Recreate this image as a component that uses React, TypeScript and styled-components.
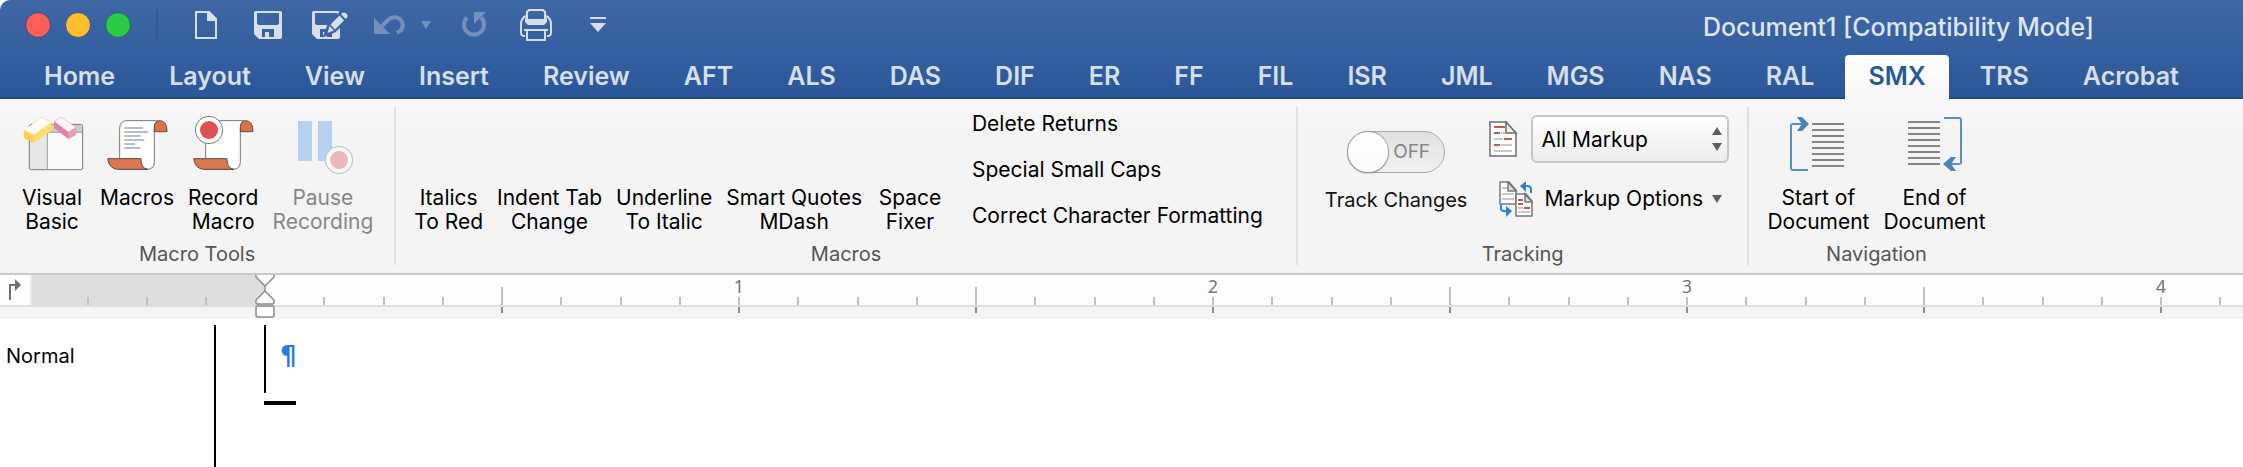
import React from 'react';
import styled, { createGlobalStyle } from 'styled-components';

const GlobalStyle = createGlobalStyle`
  *, *::before, *::after { box-sizing: border-box; }
  body { margin: 0; background: #fff; font-family: Inter, "Noto Sans", sans-serif; color: #000; }
  button, select, input { font: inherit; color: inherit; margin: 0; padding: 0; border: 0; background: none; }
  svg { display: block; flex: none; }
`;

const Page = styled.div`
  display: flex;
  flex-direction: column;
  min-height: 100vh;
  overflow: hidden;
`;

const Header = styled.header`
  border-top-left-radius: 10px;
  background: linear-gradient(#3e67a5, #2a579a);
  box-shadow: inset 0 -2px 0 #24487f;
`;

const TitleBar = styled.div`
  display: flex;
  align-items: center;
  height: 55px;
  padding: 0 149px 0 25px;
`;

const WindowTools = styled.div`
  display: flex;
  align-items: center;
  padding-bottom: 5px;
`;

const WindowButton = styled.button<{ $fill: string; $edge: string }>`
  width: 26px;
  height: 26px;
  margin-right: 14px;
  border-radius: 50%;
  border: 1px solid ${(p) => p.$edge};
  background: ${(p) => p.$fill};
`;

const Separator = styled.span`
  width: 2px;
  height: 32px;
  margin: 0 17px 0 11px;
  background: #33588f;
`;

const QuickButton = styled.button`
  display: flex;
  justify-content: center;
  align-items: center;
  width: 62px;
  height: 40px;
  color: #d7dfee;
`;

const UndoGroup = styled.div`
  display: flex;
  justify-content: center;
  gap: 16px;
  width: 82px;
`;

const FadedButton = styled(QuickButton)<{ $wide?: boolean }>`
  width: ${(p) => (p.$wide ? '62px' : 'auto')};
  color: #7590be;
`;

const DocTitle = styled.h1`
  margin: 0 0 0 auto;
  padding-bottom: 2px;
  font-size: 25px;
  font-weight: 500;
  line-height: 30px;
  color: #dfe6f1;
  white-space: nowrap;
`;

const TabBar = styled.nav`
  display: flex;
  gap: 8px;
  padding-left: 21px;
`;

const Tab = styled.button<{ $active?: boolean }>`
  padding: 0 23px 2px;
  border-radius: 4px 4px 0 0;
  font-size: 25px;
  font-weight: 600;
  line-height: 42px;
  white-space: nowrap;
  color: ${(p) => (p.$active ? '#2a579a' : '#d7dfec')};
  background: ${(p) => (p.$active ? 'linear-gradient(#fff, #f7f7f7)' : 'none')};
`;

const Ribbon = styled.section`
  display: flex;
  padding: 8px 0;
  background: linear-gradient(#f8f8f8, #f4f4f4 36px);
  border-bottom: 2px solid #c9c9c9;
`;

const Group = styled.div`
  display: flex;
  flex-direction: column;
  justify-content: space-between;
  height: 158px;
  border-right: 2px solid #e0e0e0;
  &:last-child { border-right-color: transparent; }
`;

const GroupBody = styled.div<{ $end: number }>`
  display: flex;
  align-items: flex-start;
  gap: 2px;
  padding: 0 ${(p) => p.$end}px 0 12px;
`;

const GroupName = styled.div`
  font-size: 20px;
  line-height: 22px;
  text-align: center;
  color: #555;
`;

const BigButton = styled.button`
  display: flex;
  flex-direction: column;
  align-items: center;
  min-width: 80px;
  padding: 9px 6px 0;
  font-size: 21px;
  line-height: 24px;
  white-space: pre;
  &:disabled { color: #868686; }
`;

const IconSlot = styled.span`
  width: 60px;
  height: 60px;
  margin-bottom: 10px;
  svg { overflow: visible; }
`;

const CommandList = styled.div`
  display: flex;
  flex-direction: column;
  align-items: flex-start;
  gap: 22px;
  padding: 5px 0 0 20px;
`;

const TextButton = styled.button`
  font-size: 21px;
  line-height: 24px;
  white-space: nowrap;
`;

const TrackBlock = styled.label`
  display: flex;
  flex-direction: column;
  align-items: center;
  gap: 15px;
  padding: 24px 20px 0 15px;
  font-size: 20px;
  line-height: 24px;
  color: #111;
  white-space: nowrap;
`;

const Switch = styled.span`
  display: grid;
  align-items: center;
  width: 98px;
  height: 42px;
`;

const SwitchInput = styled.input`
  appearance: none;
  grid-area: 1 / 1;
  width: 98px;
  height: 42px;
  border: 1px solid #a9a9a9;
  border-radius: 21px;
  background: linear-gradient(#e0e0e0, #f2f2f2);
  &::before {
    content: '';
    display: block;
    width: 40px;
    height: 40px;
    border-radius: 50%;
    background: linear-gradient(#fff, #fafafa);
    box-shadow: 0 0 0 1px #999, 0 1px 2px #777;
  }
`;

const SwitchText = styled.span`
  grid-area: 1 / 1;
  padding-left: 46px;
  font-size: 19px;
  color: #858585;
`;

const MarkupColumn = styled.div`
  display: flex;
  flex-direction: column;
  gap: 18px;
  padding-top: 8px;
`;

const MarkupRow = styled.div`
  display: flex;
  align-items: center;
  gap: 14px;
`;

const SelectBox = styled.div`
  display: grid;
  align-items: center;
  width: 198px;
  svg { grid-area: 1 / 1; justify-self: end; margin-right: 7px; pointer-events: none; }
`;

const Select = styled.select`
  grid-area: 1 / 1;
  appearance: none;
  height: 48px;
  padding: 0 30px 0 8px;
  border: 2px solid #c6c6c6;
  border-radius: 6px;
  background: linear-gradient(#fff, #ececec);
  font-size: 21px;
`;

const OptionsButton = styled.button`
  display: flex;
  align-items: center;
  gap: 11px;
  margin-left: 10px;
  font-size: 21px;
  line-height: 24px;
  white-space: nowrap;
  svg:last-child { margin-left: -2px; }
`;

const Ruler = styled.div`
  position: relative;
  display: flex;
  height: 44px;
  overflow: hidden;
  background: linear-gradient(#fdfdfd 30px, #dedede 30px, #dedede 32px, #f4f4f4 32px);
`;

const TabStop = styled.button`
  display: flex;
  flex: none;
  align-items: center;
  width: 32px;
  height: 30px;
  padding-left: 8px;
  border-right: 2px solid #ececec;
`;

const MarginZone = styled.div`
  display: flex;
  flex: none;
  justify-content: flex-end;
  width: 234px;
  height: 38px;
  overflow: hidden;
  background: linear-gradient(#dedede 30px, transparent 30px);
`;

const Inch = styled.div`
  display: grid;
  flex: none;
  grid-template-columns: repeat(8, 1fr);
  width: 474px;
  height: 38px;
`;

const TickCell = styled.div`
  display: flex;
  flex-direction: column;
  justify-content: flex-end;
  align-items: flex-end;
  min-width: 59px;
  height: 38px;
`;

const TickUp = styled.span<{ $tall?: boolean }>`
  width: 2px;
  height: ${(p) => (p.$tall ? 18 : 8)}px;
  background: #c0c0c0;
`;

const TickDown = styled.span<{ $shown?: boolean }>`
  width: 2px;
  height: 6px;
  margin-top: 2px;
  background: ${(p) => (p.$shown ? '#8c8c8c' : 'transparent')};
`;

const TickLabel = styled.span`
  width: 40px;
  margin-right: -19px;
  font-family: "Noto Sans", sans-serif;
  font-size: 18px;
  line-height: 22px;
  text-align: center;
  color: #777;
`;

const IndentMarker = styled.div`
  position: absolute;
  left: 254px;
  top: 0;
`;

const Workspace = styled.main`
  display: flex;
  flex: 1;
  min-height: 148px;
  padding-top: 6px;
  background: #fff;
`;

const StyleArea = styled.aside`
  width: 216px;
  padding: 19px 0 0 6px;
  border-right: 2px solid #000;
  font-size: 20px;
  line-height: 24px;
`;

const Canvas = styled.article`
  flex: 1;
  padding-left: 48px;
`;

const Line = styled.p`
  display: flex;
  height: 68px;
  margin: 0 0 8px;
  padding: 14px 0 0 14px;
  border-left: 2px solid #000;
  font-family: "DejaVu Sans", sans-serif;
  font-size: 26px;
  font-weight: 700;
  line-height: 34px;
  color: #2b7ae6;
`;

const EndMark = styled.div`
  width: 32px;
  height: 4px;
  background: #000;
`;

const diskBody =
  'M2 0H26Q28 0 28 2V26Q28 28 26 28H5L0 23V2Q0 0 2 0ZM3 2V12Q3 14 5 14H23Q25 14 25 12V2ZM8 18V26H11V21H15V26H20V18Z';

const NewIcon = () => (
  <svg width="22" height="28" viewBox="0 0 22 28">
    <path d="M1 1H14L21 8V27H1Z" fill="none" stroke="currentColor" strokeWidth="2" />
    <path d="M12 0H14L22 8V10H12Z" fill="currentColor" />
  </svg>
);

const SaveIcon = () => (
  <svg width="28" height="28" viewBox="0 0 28 28">
    <path d={diskBody} fill="currentColor" fillRule="evenodd" />
  </svg>
);

const SaveAsIcon = () => (
  <svg width="36" height="28" viewBox="0 0 36 28" overflow="visible">
    <path d={diskBody} fill="currentColor" fillRule="evenodd" />
    <path d="M15 22L18 14L31 1L36 6L22 19Z" fill="#3a63a1" stroke="#3a63a1" strokeWidth="5" />
    <path d="M29 3L31 1.600Q33 1 35 3Q36.500 5 35 6.500L33.500 8Z" fill="currentColor" />
    <path d="M27.500 4.500L32 9.500L23 18.500L18.500 13.500Z" fill="currentColor" />
    <path d="M17.500 15L22 19.500L15.500 22Z" fill="currentColor" />
  </svg>
);

const UndoIcon = () => (
  <svg width="31" height="21" viewBox="0 0 31 21">
    <path d="M0 3V19H16Z" fill="currentColor" />
    <path d="M8 11L14 5Q20 0 26 4Q31 9 27 15L23 18" fill="none" stroke="currentColor" strokeWidth="4" />
  </svg>
);

const RedoIcon = () => (
  <svg width="25" height="28" viewBox="0 0 25 28">
    <path d="M12 1H24L12 13Z" fill="currentColor" />
    <path d="M5 6.500A10 10 0 1 0 19 6.500" fill="none" stroke="currentColor" strokeWidth="4" />
  </svg>
);

const PrintIcon = () => (
  <svg width="32" height="32" viewBox="0 0 32 32">
    <path d="M7 12V3L9 1H23L25 3V12" fill="none" stroke="currentColor" strokeWidth="2" />
    <path d="M5 9L7 10H25L27 9V13L24 16H8L5 13Z" fill="currentColor" />
    <path d="M6 7L4 8Q1 11 1 15V24Q1 27 5 27M26 7L28 8Q31 11 31 15V24Q31 27 27 27" fill="none" stroke="currentColor" strokeWidth="2" />
    <path d="M4 20H28V22H4Z" fill="currentColor" />
    <path d="M7 21H25V31H7Z" fill="none" stroke="currentColor" strokeWidth="2" />
  </svg>
);

const CustomizeIcon = () => (
  <svg width="16" height="16" viewBox="0 0 16 16">
    <path d="M0 0H16V2H0ZM0 6H16L8 15Z" fill="currentColor" />
  </svg>
);

const CaretIcon = ({ color = 'currentColor' }: { color?: string }) => (
  <svg width="10" height="8" viewBox="0 0 10 8">
    <path d="M0 0H10L5 8Z" fill={color} />
  </svg>
);

const StepperIcon = () => (
  <svg width="10" height="24" viewBox="0 0 10 24">
    <path d="M5 0L10 8H0ZM0 16H10L5 24Z" fill="#5e5e5e" />
  </svg>
);

const VisualBasicIcon = () => (
  <svg width="60" height="60" viewBox="66 48 180 180">
    <rect x="88" y="73" width="160" height="136" rx="7" fill="#fafafa" stroke="#777" strokeWidth="3" />
    <path d="M90 97H142V207H95Q90 207 90 202Z" fill="#e7e7e7" />
    <path d="M90 80Q90 75 95 75H241Q246 75 246 80V96H90Z" fill="#cdcdcd" />
    <path d="M88 97H248M142 97V208" stroke="#777" strokeWidth="2" />
    <path d="M72 93L125 52L155 67V91L101 128L72 115Z" fill="#f9cf4e" />
    <path d="M101 105V128L155 91V67Z" fill="#ffdc66" />
    <path d="M72 91L125 52L155 67L101 105Z" fill="#fffdf5" stroke="#e6cf84" strokeWidth="1" />
    <path d="M162 63L183 52L228 82V104L205 117L162 84Z" fill="#dd86a3" />
    <path d="M205 96V117L228 104V82Z" fill="#eb9bb4" />
    <path d="M162 63L183 52L228 82L205 96Z" fill="#fff6fa" stroke="#dfa5b8" strokeWidth="1" />
  </svg>
);

const ScrollShape = ({ open }: { open?: boolean }) => (
  <>
    <path
      d={open ? 'M38 62H152Q142 70 142 85V185Q142 208 120 208H38Z' : 'M60 62H152Q142 70 142 85V185Q142 208 120 208H38V85Q38 62 60 62Z'}
      fill="#fff"
      stroke="#777"
      strokeWidth="3"
    />
    <path d="M142 95V80Q144 62 160 62Q180 64 180 95Z" fill="#df7048" stroke="#5f4a42" strokeWidth="3" />
    <path d="M2 176H102Q101 204 122 208H32Q6 206 2 176Z" fill="#dc7650" stroke="#5f4a42" strokeWidth="3" />
  </>
);

const MacrosIcon = () => (
  <svg width="60" height="60" viewBox="0 48 180 180">
    <ScrollShape />
    <path d="M52 84H108M52 96H123M52 108H101M52 120H112M52 132H84M52 144H101" stroke="#b9bdc9" strokeWidth="6" />
  </svg>
);

const RecordIcon = () => (
  <svg width="60" height="60" viewBox="0 48 180 180">
    <ScrollShape open />
    <circle cx="48" cy="90" r="41" fill="#fff" stroke="#777" strokeWidth="3" />
    <circle cx="48" cy="90" r="27" fill="#dd5053" />
  </svg>
);

const PauseIcon = () => (
  <svg width="60" height="60" viewBox="879 48 180 180">
    <path d="M894 63H936V183H894ZM954 63H996V183H954Z" fill="#b5d1ef" />
    <circle cx="1017" cy="180" r="41" fill="#f8f8f8" stroke="#bbb" strokeWidth="3" />
    <circle cx="1017" cy="180" r="27" fill="#edb8b9" />
  </svg>
);

const StartIcon = () => (
  <svg width="60" height="60" viewBox="0 0 60 60">
    <path d="M24 8H56M24 14H56M24 20H56M24 26H56M24 32H56M24 38H56M24 44H56M24 50H56" stroke="#848484" strokeWidth="2" />
    <path d="M20 54H5Q3 54 3 52V10Q3 8 5 8H18" fill="none" stroke="#5a8fc4" strokeWidth="2" />
    <path d="M9 1H14L21 8L14 15H9L14 8Z" fill="#4b82b9" />
  </svg>
);

const EndIcon = () => (
  <svg width="60" height="60" viewBox="0 0 60 60">
    <path d="M3 6H35M3 12H35M3 18H35M3 24H35M3 30H35M3 36H35M3 42H35M3 48H35" stroke="#848484" strokeWidth="2" />
    <path d="M39 2H54Q56 2 56 4V46Q56 48 54 48H42" fill="none" stroke="#5a8fc4" strokeWidth="2" />
    <path d="M51 41H46L38 48L46 55H51L46 48Z" fill="#4b82b9" />
  </svg>
);

const MarkupPageIcon = () => (
  <svg width="28" height="36" viewBox="0 0 28 36">
    <path d="M1 1H17L27 12V35H1Z" fill="#fff" stroke="#6d6d6d" strokeWidth="1.500" />
    <path d="M17 1V12H27Z" fill="#eee" stroke="#6d6d6d" strokeWidth="1.500" />
    <path d="M5 6H16M5 12H11M15 18H23M5 24H11" stroke="#cb5350" strokeWidth="2" />
    <path d="M12 12H16M5 18H14M12 24H23M5 30H23" stroke="#c8c8c8" strokeWidth="2" />
  </svg>
);

const MarkupOptionsIcon = () => (
  <svg width="34" height="36" viewBox="0 0 34 36">
    <path d="M1 1H10L17 9V23H1Z" fill="#fff" stroke="#777" strokeWidth="1.500" />
    <path d="M9 1V10H17Z" fill="#ddd" stroke="#777" strokeWidth="1.500" />
    <path d="M3 7H8M3 13H15M3 18H15" stroke="#c8c8c8" strokeWidth="2" />
    <path d="M17 13H27L33 20V35H17Z" fill="#fff" stroke="#777" strokeWidth="1.500" />
    <path d="M26 13V21H33Z" fill="#ddd" stroke="#777" strokeWidth="1.500" />
    <path d="M19 19H24M19 23H24M25 27H31" stroke="#cb5350" strokeWidth="2" />
    <path d="M19 27H24M19 31H31" stroke="#c8c8c8" strokeWidth="2" />
    <path d="M32 12V8Q32 5 28 5H25" fill="none" stroke="#2f7fd6" strokeWidth="2" />
    <path d="M21 5L27 0V11Z" fill="#2f7fd6" />
    <path d="M2 24V28Q2 30 5 30H8" fill="none" stroke="#2f7fd6" strokeWidth="2" />
    <path d="M13 30L7 25V36Z" fill="#2f7fd6" />
  </svg>
);

const TabStopIcon = () => (
  <svg width="14" height="22" viewBox="0 0 14 22">
    <path d="M2 21V6H8" fill="none" stroke="#707070" strokeWidth="2" />
    <path d="M7 0L13 6L7 12Z" fill="#707070" />
  </svg>
);

const MarkerIcon = () => (
  <svg width="22" height="43" viewBox="0 0 22 43">
    <path d="M11 10V17" stroke="#aaa" strokeWidth="2" />
    <path d="M2 0V2L11 11L20 2V0" fill="#fff" stroke="#8a8a8a" strokeWidth="1.500" />
    <path d="M11 16L20 25V28Q20 29 19 29H3Q2 29 2 28V25Z" fill="#fff" stroke="#8a8a8a" strokeWidth="1.500" />
    <rect x="2" y="31" width="18" height="11" rx="2" fill="#fff" stroke="#8a8a8a" strokeWidth="1.500" />
  </svg>
);

const tabs = [
  'Home', 'Layout', 'View', 'Insert', 'Review', 'AFT', 'ALS', 'DAS', 'DIF', 'ER', 'FF',
  'FIL', 'ISR', 'JML', 'MGS', 'NAS', 'RAL', 'SMX', 'TRS', 'Acrobat',
];

const macroCommands = ['Italics\nTo Red', 'Indent Tab\nChange', 'Underline\nTo Italic', 'Smart Quotes\nMDash', 'Space\nFixer'];
const listCommands = ['Delete Returns', 'Special Small Caps', 'Correct Character Formatting'];
const eighths = [1, 2, 3, 4, 5, 6, 7, 8];

const IconButton = ({ icon, label, disabled }: { icon?: React.ReactNode; label: string; disabled?: boolean }) => (
  <BigButton type="button" disabled={disabled}>
    <IconSlot>{icon}</IconSlot>
    {label}
  </BigButton>
);

const InchScale = ({ label }: { label?: number }) => (
  <Inch>
    {eighths.map((n) => (
      <TickCell key={n}>
        {n === 8 && label ? <TickLabel>{label}</TickLabel> : null}
        <TickUp $tall={n === 4} />
        <TickDown $shown={n % 4 === 0} />
      </TickCell>
    ))}
  </Inch>
);

export default function App() {
  return (
    <Page>
      <GlobalStyle />
      <Header>
        <TitleBar>
          <WindowTools>
            <WindowButton aria-label="Close" $fill="#fd5f58" $edge="#3a4a7c" />
            <WindowButton aria-label="Minimize" $fill="#febd2f" $edge="#3a5a80" />
            <WindowButton aria-label="Zoom" $fill="#2bcb42" $edge="#2a5c80" />
            <Separator />
            <QuickButton aria-label="New"><NewIcon /></QuickButton>
            <QuickButton aria-label="Save"><SaveIcon /></QuickButton>
            <QuickButton aria-label="Save As"><SaveAsIcon /></QuickButton>
            <UndoGroup>
              <FadedButton aria-label="Undo"><UndoIcon /></FadedButton>
              <FadedButton aria-label="Undo history"><CaretIcon /></FadedButton>
            </UndoGroup>
            <FadedButton $wide aria-label="Repeat"><RedoIcon /></FadedButton>
            <QuickButton aria-label="Print"><PrintIcon /></QuickButton>
            <QuickButton aria-label="Customize toolbar"><CustomizeIcon /></QuickButton>
          </WindowTools>
          <DocTitle>Document1 [Compatibility Mode]</DocTitle>
        </TitleBar>
        <TabBar>
          {tabs.map((name) => (
            <Tab key={name} type="button" $active={name === 'SMX'}>{name}</Tab>
          ))}
        </TabBar>
      </Header>

      <Ribbon>
        <Group>
          <GroupBody $end={15}>
            <IconButton icon={<VisualBasicIcon />} label={'Visual\nBasic'} />
            <IconButton icon={<MacrosIcon />} label="Macros" />
            <IconButton icon={<RecordIcon />} label={'Record\nMacro'} />
            <IconButton icon={<PauseIcon />} label={'Pause\nRecording'} disabled />
          </GroupBody>
          <GroupName>Macro Tools</GroupName>
        </Group>

        <Group>
          <GroupBody $end={33}>
            {macroCommands.map((label) => (
              <IconButton key={label} label={label} />
            ))}
            <CommandList>
              {listCommands.map((label) => (
                <TextButton key={label} type="button">{label}</TextButton>
              ))}
            </CommandList>
          </GroupBody>
          <GroupName>Macros</GroupName>
        </Group>

        <Group>
          <GroupBody $end={18}>
            <TrackBlock>
              <Switch>
                <SwitchInput type="checkbox" role="switch" />
                <SwitchText>OFF</SwitchText>
              </Switch>
              Track Changes
            </TrackBlock>
            <MarkupColumn>
              <MarkupRow>
                <MarkupPageIcon />
                <SelectBox>
                  <Select aria-label="Display for review" defaultValue="All Markup">
                    <option>All Markup</option>
                  </Select>
                  <StepperIcon />
                </SelectBox>
              </MarkupRow>
              <OptionsButton type="button">
                <MarkupOptionsIcon />
                Markup Options
                <CaretIcon color="#5e5e5e" />
              </OptionsButton>
            </MarkupColumn>
          </GroupBody>
          <GroupName>Tracking</GroupName>
        </Group>

        <Group>
          <GroupBody $end={12}>
            <IconButton icon={<StartIcon />} label={'Start of\nDocument'} />
            <IconButton icon={<EndIcon />} label={'End of\nDocument'} />
          </GroupBody>
          <GroupName>Navigation</GroupName>
        </Group>
      </Ribbon>

      <Ruler>
        <TabStop aria-label="Tab stop"><TabStopIcon /></TabStop>
        <MarginZone>
          {[3, 2, 1].map((n) => (
            <TickCell key={n}>
              <TickUp />
              <TickDown />
            </TickCell>
          ))}
          <TickCell />
        </MarginZone>
        {[1, 2, 3, 4].map((n) => (
          <InchScale key={n} label={n} />
        ))}
        <InchScale />
        <IndentMarker><MarkerIcon /></IndentMarker>
      </Ruler>

      <Workspace>
        <StyleArea>Normal</StyleArea>
        <Canvas>
          <Line>¶</Line>
          <EndMark />
        </Canvas>
      </Workspace>
    </Page>
  );
}
